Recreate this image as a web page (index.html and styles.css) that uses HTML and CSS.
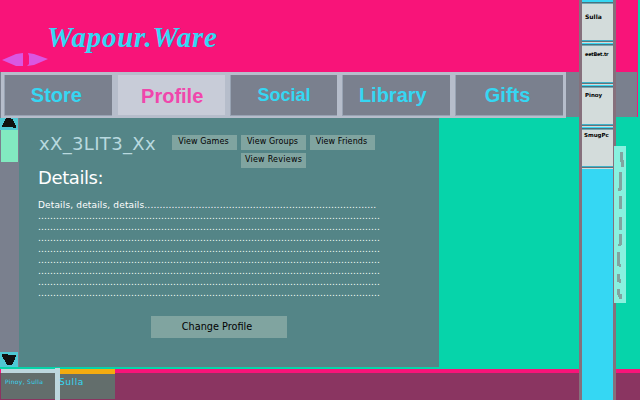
FILE: index.html
```html
<!DOCTYPE html>
<html lang="en">
<head>
<meta charset="utf-8">
<title>Wapour.Ware</title>
<link rel="stylesheet" href="styles.css">
</head>
<body>
<div class="app">
  <header class="header">
    <h1 class="logo">Wapour.Ware</h1>
    <svg class="history" width="48" height="14" viewBox="0 0 48 14"><path d="M1 7L15 1L22 0V13H15ZM27 0L33 1L47 6L33 12L26 13L28 11V3Z"/></svg>
  </header>
  <nav class="nav">
    <div class="tabs">
      <a class="tab"><span class="store">Store</span></a>
      <a class="tab active"><span class="profile-label">Profile</span></a>
      <a class="tab"><span class="social">Social</span></a>
      <a class="tab"><span class="library">Library</span></a>
      <a class="tab"><span class="gifts">Gifts</span></a>
    </div>
    <div class="nav-rest"></div>
  </nav>
  <main class="main">
    <div class="scrollbar">
      <div class="arrow up"><svg width="18" height="12" viewBox="0 0 18 12"><path d="M6 0H11V1H13V3H14V5H15V7H16V10H13V9H2V7H3V5H4V3H5V1H6Z"/></svg></div>
      <div class="thumb"></div>
      <div class="arrow down"><svg width="18" height="15" viewBox="0 0 18 15"><path d="M2 2H8V3H16V5H15V8H14V10H13V12H12V13H7V12H6V10H5V8H4V7H3V5H2Z"/></svg></div>
    </div>
    <section class="profile">
      <div class="top">
        <h2 class="name">xX_3LIT3_Xx</h2>
        <div class="actions">
          <button class="small">View Games</button>
          <button class="small">View Groups</button>
          <button class="small">View Friends</button>
          <button class="small second">View Reviews</button>
        </div>
      </div>
      <h3 class="heading">Details:</h3>
      <div class="details">
        <p class="first">Details, details, details.............................................................................</p>
        <p>..................................................................................................................</p>
        <p>..................................................................................................................</p>
        <p>..................................................................................................................</p>
        <p>..................................................................................................................</p>
        <p>..................................................................................................................</p>
        <p>..................................................................................................................</p>
        <p>..................................................................................................................</p>
        <p>..................................................................................................................</p>
      </div>
      <button class="change">Change Profile</button>
    </section>
  </main>
  <footer class="footer">
    <div class="chat group"><span>Pinoy, Sulla</span></div>
    <div class="divider"></div>
    <div class="chat single"><span>Sulla</span></div>
  </footer>
  <aside class="friends">
    <div class="friend"><span>Sulla</span></div>
    <div class="friend long"><span>eetBet.tr</span></div>
    <div class="friend low"><span>Pinoy</span></div>
    <div class="friend last"><span>SmugPc</span></div>
  </aside>
  <div class="side-tab">
    <svg width="12" height="157" viewBox="0 0 12 157"><path d="M6 6H9V14H10V21H7V16H6ZM5 26H8V44H7V45H4V42H5ZM5 50H8V63H5ZM5 71H8V84H5ZM5 88H8V99H7V100H4V98H5ZM3 106H6V118H7V121H5V120H3ZM3 128H6V133H7V137H5V136H3ZM3 143H6V148H8V153H5V151H4V149H3Z"/></svg>
  </div>
</div>
</body>
</html>
```
FILE: styles.css
```css
* { box-sizing: border-box; margin: 0; padding: 0; }
body { font-family: "DejaVu Sans", sans-serif; }
button { border: 0; font-family: inherit; color: #000; }
.app { position: relative; width: 640px; height: 400px; overflow: hidden; display: flex; flex-direction: column; background: #06d4aa; }
.header { height: 72px; width: 638px; background: #f81479; padding-top: 21px; }
.logo { font: italic bold 29px/32px "Liberation Serif", serif; color: #35d7f3; margin-left: 47px; height: 32px; letter-spacing: 0.75px; white-space: nowrap; }
.history { display: block; margin-left: 1px; fill: #da57e2; }
.nav { height: 46px; width: 638px; display: flex; background: linear-gradient(#f81479, #f81479) right top / 1px 45px no-repeat; }
.tabs { width: 566px; height: 46px; display: flex; gap: 5px; padding: 3px 3px 2px 3px; background: #b6bdcb; border-left: 1px solid #7a808e; }
.tab { flex: 1; height: 41px; display: flex; background: #7a808e; border-left: 1px solid #98a3b3; border-bottom: 1px solid #98a3b3; justify-content: center; align-items: center; font: bold 20px "Liberation Sans", sans-serif; color: #35d7f3; }
.active { background: #c8ccd8; border-color: #b6bdcb; color: #f047ac; }
.tab span { position: relative; top: 0; }
.tab .store { left: -2px; }
.tab .profile-label { top: 1px; left: 1px; }
.tab .social { font-size: 18px; }
.tab .library { left: -4px; }
.tab .gifts { left: -2px; }
.nav-rest { width: 71px; height: 45px; background: #7a808e; }
.main { height: 249px; display: flex; }
.scrollbar { width: 19px; background: #7a808e; display: flex; flex-direction: column; }
.arrow { width: 18px; height: 12px; background: #4fc8d4; }
.arrow svg { display: block; fill: #111; }
.thumb { width: 17px; height: 32px; margin-left: 1px; background: #82eac0; }
.down { height: 15px; margin-top: auto; }
.profile { width: 420px; background: #548587; }
.top { display: flex; height: 50px; }
.name { margin-left: 20px; width: 133px; padding-top: 15px; font-size: 18px; line-height: 22px; font-weight: 400; letter-spacing: 0.35px; color: #b8d9df; white-space: nowrap; }
.actions { display: grid; grid-template-columns: 65px 65px 65px; gap: 3px 4px; padding-top: 17px; align-content: start; }
.small { width: 65px; height: 15px; background: #80a4a0; font-size: 8px; line-height: 12px; letter-spacing: 0.1px; padding: 0 2px 2px 0; white-space: nowrap; }
.second { grid-column: 2; padding-right: 0; letter-spacing: 0.25px; }
.heading { margin-left: 19px; font-size: 18px; line-height: 20px; font-weight: 400; color: #fff; height: 28px; letter-spacing: -0.4px; }
.details { margin-left: 19px; width: 345px; padding-top: 4px; color: #fff; font-size: 9px; line-height: 11px; height: 103px; }
.details p { height: 11px; white-space: nowrap; letter-spacing: 0.14px; }
.details .first { letter-spacing: 0.15px; }
.change { display: block; margin: 17px 0 0 132px; width: 136px; height: 22px; background: #80a4a0; font-size: 9.7px; padding: 0 4px 1px 0; }
.footer { margin-top: 1px; height: 32px; display: flex; background: linear-gradient(#06d4aa 0 1px, #f81479 1px 5px, #8a3561 5px); }
.chat { color: #35d7f3; white-space: nowrap; height: 30px; margin-top: 1px; background: #636e6c; }
.group { margin-left: 1px; width: 54px; border-top: 4px solid #bdd7de; font-size: 6px; line-height: 17px; letter-spacing: 0.3px; padding-left: 4px; }
.divider { width: 5px; background: #bdd7de; }
.single { width: 55px; border-top: 5px solid #f4ab10; font-size: 9px; line-height: 16px; letter-spacing: 0.6px; }
.single span { position: relative; left: -1px; }
.friends { position: absolute; left: 579px; top: 0; width: 37px; height: 400px; border: solid #86707c; border-width: 0 3px; background: #35d7f3; padding-top: 2px; }
.friend { height: 42px; background: linear-gradient(#49727e 0 1px, #76a7b1 1px 2px, #d3dcdb 2px 38px, #3fb2ca 38px 39px, #657378 39px 40px, #d3dcdb 40px 41px, #35d7f3 41px); font-size: 6px; line-height: 8px; font-weight: bold; padding: 11px 0 0 3px; white-space: nowrap; }
.long { font-size: 5px; padding-top: 6px; letter-spacing: -0.25px; }
.low { padding-top: 5px; font-size: 5.5px; }
.last { padding: 3px 0 0 2px; font-size: 5.5px; }
.side-tab { position: absolute; left: 614px; top: 146px; width: 12px; height: 157px; background: #89f1df; }
.side-tab svg { display: block; fill: #80a4a0; }
```
